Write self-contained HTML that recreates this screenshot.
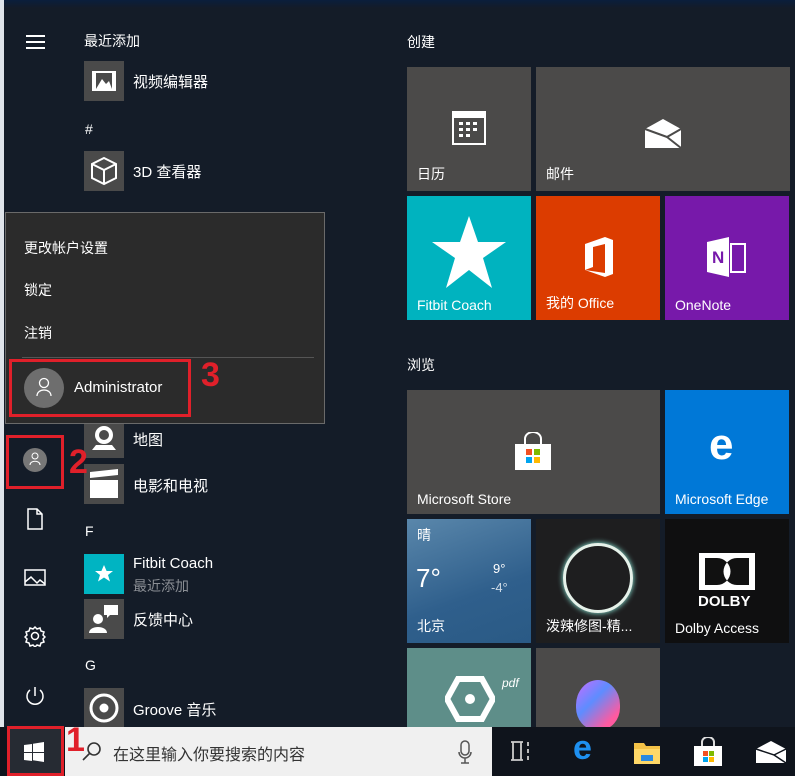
<!DOCTYPE html>
<html><head><meta charset="utf-8"><style>
*{margin:0;padding:0;box-sizing:border-box}
body{width:795px;height:776px;overflow:hidden;background:#141c28;font-family:"Liberation Sans","Noto Sans CJK SC",sans-serif;color:#fff;position:relative}
.a{position:absolute}
.t{font-size:14px;color:#fff}
.ic{position:absolute;left:84px;width:40px;height:40px;background:#4a4a4a}
.lbl{position:absolute;left:133px;font-size:15px;color:#fff}
.tile{position:absolute;width:124px;height:124px}
.tl{position:absolute;left:10px;bottom:7px;font-size:14px;color:#fff}
.red{position:absolute;border:3px solid #e0202a}
.num{position:absolute;color:#e0202a;font-weight:bold;font-size:34px;font-family:"Liberation Sans",sans-serif}
</style></head><body>
<div class="a" style="left:0;top:0;width:795px;height:8px;background:linear-gradient(#0a1e3c,#141c28)"></div>
<div class="a" style="left:0;top:0;width:4px;height:776px;background:#dfe4ea"></div>
<div class="a" style="left:26px;top:35px;width:19px;height:2px;background:#fff;box-shadow:0 6px 0 #fff,0 12px 0 #fff"></div>
<div class="a t" style="left:84px;top:31px">最近添加</div>
<div class="ic" style="top:61px"><svg width="40" height="40"><rect x="8" y="10" width="24" height="20" fill="#fff"/><rect x="12" y="12" width="16" height="16" fill="#4a4a4a"/><path d="M12 28l6-10 4 5 3-3 3 8z" fill="#fff"/></svg></div>
<div class="lbl" style="top:71px">视频编辑器</div>
<div class="a t" style="left:85px;top:121px">#</div>
<div class="ic" style="top:151px"><svg width="40" height="40" fill="none" stroke="#fff" stroke-width="2"><path d="M20 7l12 6v14l-12 6-12-6V13z M8 13l12 6 12-6 M20 19v14"/></svg></div>
<div class="lbl" style="top:161px">3D 查看器</div>
<div class="ic" style="top:418px"><svg width="40" height="40"><circle cx="20" cy="17" r="9" fill="#fff"/><circle cx="20" cy="17" r="5" fill="#4a4a4a"/><path d="M8 32h24l-4-5H12z" fill="#fff"/></svg></div>
<div class="lbl" style="top:429px">地图</div>
<div class="ic" style="top:464px"><svg width="40" height="40"><rect x="6" y="16" width="28" height="18" fill="#fff"/><path d="M6 8l28-3v6L6 14z" fill="#fff"/></svg></div>
<div class="lbl" style="top:475px">电影和电视</div>
<div class="a t" style="left:85px;top:523px">F</div>
<div class="ic" style="top:554px;background:#00b4c2"><svg width="40" height="40"><path d="M20 11l2.6 6h6.4l-5 4 2 6.5-6-4-6 4 2-6.5-5-4h6.4z" fill="#fff"/></svg></div>
<div class="lbl" style="top:555px">Fitbit Coach</div>
<div class="a" style="left:133px;top:576px;font-size:14px;color:#8a8e94">最近添加</div>
<div class="ic" style="top:599px"><svg width="40" height="40"><circle cx="14" cy="20" r="5" fill="#fff"/><path d="M5 34c0-8 18-8 18 0z" fill="#fff"/><path d="M20 6h14v10h-8l-3 3v-3h-3z" fill="#fff"/></svg></div>
<div class="lbl" style="top:609px">反馈中心</div>
<div class="a t" style="left:85px;top:657px">G</div>
<div class="ic" style="top:688px"><svg width="40" height="40" fill="none" stroke="#fff" stroke-width="3"><circle cx="20" cy="20" r="13"/><circle cx="20" cy="20" r="3" fill="#fff"/></svg></div>
<div class="lbl" style="top:699px">Groove 音乐</div>

<svg class="a" style="left:24px;top:508px" width="22" height="22" fill="none" stroke="#fff" stroke-width="1.5"><path d="M4 1h9l5 5v15H4z M13 1v5h5"/></svg>
<svg class="a" style="left:24px;top:568px" width="22" height="20" fill="none" stroke="#fff" stroke-width="1.5"><rect x="1" y="2" width="20" height="15"/><path d="M1 14l6-5 6 6 3-3 5 4"/></svg>
<svg class="a" style="left:24px;top:625px" width="22" height="22" fill="none" stroke="#fff" stroke-width="1.5"><circle cx="11" cy="11" r="3.5"/><path d="M11 2l2 2 3-1 1 3 3 1-1 3 2 2-2 2 1 3-3 1-1 3-3-1-2 2-2-2-3 1-1-3-3-1 1-3-2-2 2-2-1-3 3-1 1-3 3 1z"/></svg>
<svg class="a" style="left:24px;top:685px" width="22" height="22" fill="none" stroke="#fff" stroke-width="1.5"><path d="M11 2v9 M6 5a8 8 0 1 0 10 0"/></svg>
<div class="a" style="left:23px;top:448px;width:24px;height:24px;border-radius:50%;background:#777"></div>
<svg class="a" style="left:29px;top:452px" width="12" height="14" fill="none" stroke="#fff" stroke-width="1"><circle cx="6" cy="4" r="3"/><path d="M1 13c0-5 10-5 10 0"/></svg>

<div class="a" style="left:5px;top:212px;width:320px;height:212px;background:#2b2b2b;border:1px solid #6a6a6a">
<div class="a t" style="left:18px;top:25px;font-size:14px">更改帐户设置</div>
<div class="a t" style="left:18px;top:67px">锁定</div>
<div class="a t" style="left:18px;top:110px">注销</div>
<div class="a" style="left:16px;top:144px;width:292px;height:1px;background:#555"></div>
<div class="a" style="left:18px;top:155px;width:40px;height:40px;border-radius:50%;background:#6e6e6e"></div>
<svg class="a" style="left:30px;top:164px" width="16" height="20" fill="none" stroke="#fff" stroke-width="1.3"><circle cx="8" cy="6" r="4.5"/><path d="M1 19c0-8 14-8 14 0"/></svg>
<div class="a" style="left:68px;top:166px;font-size:15px;color:#fff">Administrator</div>
</div>
<div class="red" style="left:9px;top:359px;width:182px;height:58px"></div>
<div class="num" style="left:201px;top:356px">3</div>
<div class="red" style="left:6px;top:435px;width:58px;height:54px"></div>
<div class="num" style="left:69px;top:443px">2</div>

<div class="a t" style="left:407px;top:32px">创建</div>
<div class="tile" style="left:407px;top:67px;background:#4b4a49"><svg class="a" style="left:44px;top:40px" width="36" height="40"><rect x="2" y="5" width="32" height="32" fill="none" stroke="#fff" stroke-width="2"/><rect x="2" y="5" width="32" height="6" fill="#fff"/><g fill="#fff"><rect x="8" y="15" width="4" height="3"/><rect x="15" y="15" width="4" height="3"/><rect x="22" y="15" width="4" height="3"/><rect x="8" y="21" width="4" height="3"/><rect x="15" y="21" width="4" height="3"/><rect x="22" y="21" width="4" height="3"/><rect x="8" y="27" width="4" height="3"/><rect x="15" y="27" width="4" height="3"/></g></svg><div class="tl">日历</div></div>
<div class="tile" style="left:536px;top:67px;width:254px;background:#4b4a49"><svg class="a" style="left:107px;top:50px" width="40" height="32"><path d="M2 12L20 2l18 10v19H2z" fill="#fff"/><path d="M2 12l22 8 14-8" fill="none" stroke="#4b4a49" stroke-width="2"/><path d="M24 20l14 11" stroke="#4b4a49" stroke-width="2"/></svg><div class="tl">邮件</div></div>
<div class="tile" style="left:407px;top:196px;background:#00b3bf"><svg class="a" style="left:24px;top:18px" width="76" height="78"><path d="M38 2l9 26h28L52 44l9 30-23-18-23 18 9-30L1 28h28z" fill="#fff"/></svg><div class="tl">Fitbit Coach</div></div>
<div class="tile" style="left:536px;top:196px;background:#dc3c00"><svg class="a" style="left:45px;top:40px" width="34" height="42"><path d="M4 8L24 1l8 3v34l-8 3L4 34l20 3V8L12 11v20L4 34z" fill="#fff"/></svg><div class="tl">我的 Office</div></div>
<div class="tile" style="left:665px;top:196px;background:#7719aa"><svg class="a" style="left:40px;top:40px" width="44" height="42"><path d="M2 6L24 1v40L2 36z" fill="#fff"/><text x="7" y="27" font-size="17" font-weight="bold" fill="#7719aa" font-family="Liberation Sans">N</text><rect x="26" y="8" width="14" height="28" fill="none" stroke="#fff" stroke-width="2"/></svg><div class="tl">OneNote</div></div>
<div class="a t" style="left:407px;top:355px">浏览</div>
<div class="tile" style="left:407px;top:390px;width:253px;background:#4b4a49"><svg class="a" style="left:106px;top:42px" width="40" height="40"><rect x="2" y="12" width="36" height="26" fill="#fff"/><path d="M12 12V7a8 7 0 0 1 16 0v5" fill="none" stroke="#fff" stroke-width="2"/><rect x="13" y="17" width="6" height="6" fill="#f25022"/><rect x="21" y="17" width="6" height="6" fill="#7fba00"/><rect x="13" y="25" width="6" height="6" fill="#00a4ef"/><rect x="21" y="25" width="6" height="6" fill="#ffb900"/></svg><div class="tl">Microsoft Store</div></div>
<div class="tile" style="left:665px;top:390px;background:#0078d7"><div class="a" style="left:44px;top:30px;font-size:44px;font-weight:bold;color:#fff;font-family:'Liberation Sans'">e</div><div class="tl">Microsoft Edge</div></div>
<div class="tile" style="left:407px;top:519px;background:linear-gradient(160deg,#5a87ab,#2f5f8c 60%,#2a5a85)"><div class="a" style="left:10px;top:6px;font-size:14px">晴</div><div class="a" style="left:9px;top:44px;font-size:26px">7°</div><div class="a" style="left:86px;top:42px;font-size:13px">9°</div><div class="a" style="left:84px;top:61px;font-size:13px;color:#cfdbe6">-4°</div><div class="tl">北京</div></div>
<div class="tile" style="left:536px;top:519px;background:#1e1e1f"><div class="a" style="left:27px;top:24px;width:70px;height:70px;border-radius:50%;border:3px solid #e6f2ea;box-shadow:0 0 6px #9fe"></div><div class="tl">泼辣修图-精...</div></div>
<div class="tile" style="left:665px;top:519px;background:#0f0f10"><div class="a" style="left:34px;top:34px;width:56px;height:37px;background:#fff"></div><svg class="a" style="left:34px;top:34px" width="56" height="37"><path d="M6 5h12a13 13 0 0 1 0 27H6z M50 5H38a13 13 0 0 0 0 27h12z" fill="#111"/></svg><div class="a" style="left:33px;top:74px;font-size:15px;font-weight:bold">DOLBY</div><div class="tl">Dolby Access</div></div>
<div class="tile" style="left:407px;top:648px;height:79px;background:#5e8e89"><svg class="a" style="left:38px;top:28px" width="50" height="51"><path d="M13 3h24l11 20-11 20H13L2 23z" fill="none" stroke="#fff" stroke-width="6"/><circle cx="25" cy="23" r="5" fill="#fff"/></svg><div class="a" style="left:95px;top:28px;font-size:12px;font-style:italic">pdf</div></div>
<div class="tile" style="left:536px;top:648px;height:79px;background:#4b4a49"><div class="a" style="left:40px;top:32px;width:44px;height:50px;border-radius:50% 50% 45% 45%;background:linear-gradient(135deg,#c96cff,#5e8cff 40%,#ff5aa0 80%)"></div></div>

<div class="a" style="left:0;top:727px;width:795px;height:49px;background:#0f141c"></div>
<div class="a" style="left:65px;top:727px;width:427px;height:49px;background:#f0f0f0"></div>
<div class="a" style="left:7px;top:728px;width:56px;height:47px;background:#262b33"></div>
<svg class="a" style="left:24px;top:742px" width="20" height="20" fill="#fff"><path d="M0 3l8-1v8H0z M9 1.8L20 0v10H9z M0 11h8v8l-8-1z M9 11h11v9L9 18.2z"/></svg>
<div class="red" style="left:7px;top:726px;width:57px;height:50px"></div>
<div class="num" style="left:66px;top:721px">1</div>
<svg class="a" style="left:82px;top:741px" width="20" height="20" fill="none" stroke="#333" stroke-width="1.6"><circle cx="12" cy="8" r="6"/><path d="M8 12L1 19"/></svg>
<div class="a" style="left:113px;top:741px;font-size:16px;color:#333">在这里输入你要搜索的内容</div>
<svg class="a" style="left:458px;top:740px" width="14" height="24" fill="none" stroke="#555" stroke-width="1.5"><rect x="3" y="1" width="8" height="14" rx="4"/><path d="M1 12a6 6 0 0 0 12 0 M7 18v5 M3 23h8"/></svg>
<svg class="a" style="left:510px;top:740px" width="22" height="22" fill="none" stroke="#ccc" stroke-width="1.8"><path d="M1 2h12 M1 20h12 M3 2v18 M11 2v18 M18 2v4 M18 9v4 M18 16v4"/></svg>
<div class="a" style="left:573px;top:729px;font-size:34px;font-weight:bold;color:#1e90f0">e</div>
<svg class="a" style="left:633px;top:739px" width="28" height="26"><path d="M1 4h10l2 3h14v18H1z" fill="#f3c247"/><rect x="1" y="10" width="26" height="15" fill="#ffd867"/><rect x="8" y="16" width="12" height="6" fill="#2b8ae0"/></svg>
<svg class="a" style="left:693px;top:737px" width="30" height="30"><rect x="1" y="9" width="28" height="20" fill="#fff"/><path d="M9 9V5a6 5 0 0 1 12 0v4" fill="none" stroke="#ddd" stroke-width="2"/><rect x="10" y="14" width="5" height="5" fill="#f25022"/><rect x="16" y="14" width="5" height="5" fill="#7fba00"/><rect x="10" y="20" width="5" height="5" fill="#00a4ef"/><rect x="16" y="20" width="5" height="5" fill="#ffb900"/></svg>
<svg class="a" style="left:755px;top:740px" width="32" height="24"><path d="M1 9L16 1l15 8v14H1z" fill="#fff"/><path d="M1 9l18 6 12-6 M19 15l12 8" fill="none" stroke="#0f141c" stroke-width="1.5"/></svg>
</body></html>
